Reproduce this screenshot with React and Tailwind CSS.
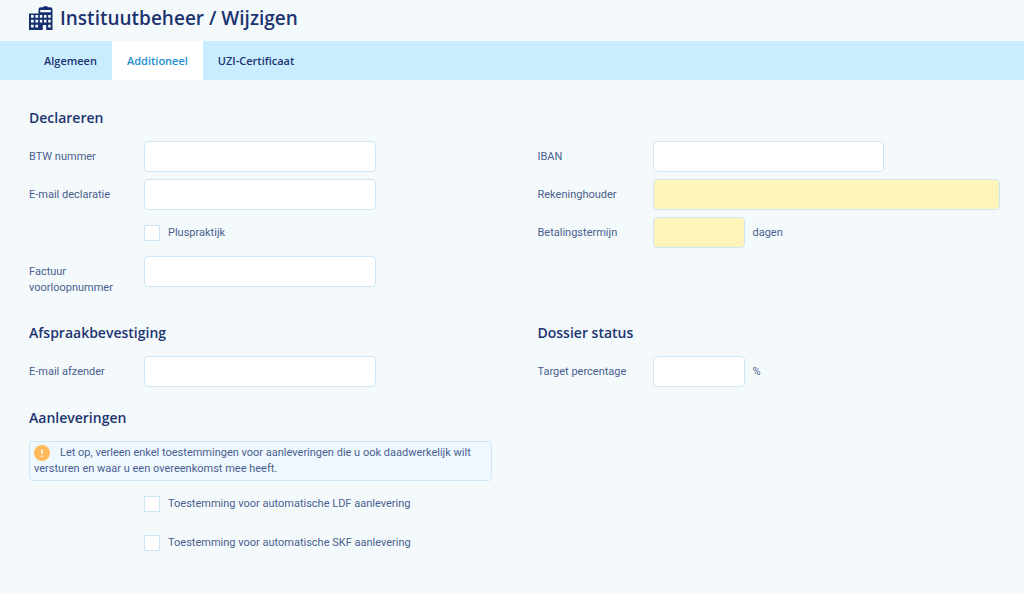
import React, { useState } from 'react';

const tabs = ['Algemeen', 'Additioneel', 'UZI-Certificaat'];

const BuildingIcon = () => (
  <svg viewBox="0 0 24 24" className="w-6 h-6 shrink-0" fill="#16306f" aria-hidden="true">
    <path
      fillRule="evenodd"
      d="M0 7.5h9.5V3.5a2.2 2.2 0 0 1 2.2-2.2h2L15 .3h3l1.3 1h2a2.2 2.2 0 0 1 2.2 2.2V24h-6.3v-5h-3.4v5H0zM11.2 4v2.2h10.6V4zM2 9v2.7h2.7V9zM6.4 9v2.7h2.7V9zM10.8 9v2.7h2.5V9zM15 9v2.7h2.5V9zM19.2 9v2.7h2.5V9zM2 13.8v2.7h2.7v-2.7zM6.4 13.8v2.7h2.7v-2.7zM10.8 13.8v2.7h2.5v-2.7zM15 13.8v2.7h2.5v-2.7zM19.2 13.8v2.7h2.5v-2.7zM2 18.8v2.7h2.7v-2.7zM6.4 18.8v2.7h2.7v-2.7zM19.2 18.8v2.7h2.5v-2.7z"
    />
  </svg>
);

const WarningIcon = () => (
  <svg viewBox="0 0 16 16" className="inline-block w-4 h-4 mr-[10px] align-middle" aria-hidden="true">
    <circle cx="8" cy="8" r="8" fill="#ffb95a" />
    <path d="M8 4.2v4.6M8 10.6v1.4" stroke="#fff" strokeWidth="1.4" />
  </svg>
);

const Heading = ({ children }) => (
  <h2 className="mb-[11px] font-['Open_Sans',sans-serif] text-[14px] leading-6 font-semibold text-[#1c3470]">
    {children}
  </h2>
);

const widths = {
  normal: 'w-2/3',
  small: 'w-[92px]',
  full: 'w-full',
};

const Field = ({ id, label, type = 'text', width = 'normal', required = false, suffix }) => (
  <div className="flex items-start">
    <label htmlFor={id} className="w-[115px] shrink-0 pt-2 pr-2">
      {label}
    </label>
    <div className="flex-1 flex items-center gap-2">
      <input
        id={id}
        name={id}
        type={type}
        required={required}
        className={`h-[31px] px-2 rounded border border-[#cfe7f5] outline-none focus:border-[#1e8fd0] ${
          required ? 'bg-[#fff5ba]' : 'bg-white'
        } ${widths[width]}`}
      />
      {suffix && <span>{suffix}</span>}
    </div>
  </div>
);

const CheckField = ({ id, label }) => (
  <div className="flex items-center h-8 ml-[115px]">
    <input
      id={id}
      name={id}
      type="checkbox"
      className="appearance-none w-4 h-4 bg-white border border-[#cfe7f5] checked:bg-[#1e8fd0]"
    />
    <label htmlFor={id} className="pl-2">
      {label}
    </label>
  </div>
);

export default function App() {
  const [active, setActive] = useState('Additioneel');

  return (
    <div className="min-h-screen bg-[#f4f9fc] font-[Roboto,sans-serif] text-[11px] leading-4 text-[#4a5f8f]">
      <header className="flex items-center gap-[7px] h-[41px] pl-[29px] pb-[5px]">
        <BuildingIcon />
        <h1 className="font-['Open_Sans',sans-serif] text-[19px] leading-7 font-semibold text-[#1c3470]">
          Instituutbeheer / Wijzigen
        </h1>
      </header>

      <nav className="flex h-[39px] pl-[29px] bg-[#c9edff] font-['Open_Sans',sans-serif]">
        {tabs.map((tab) => (
          <button
            key={tab}
            type="button"
            onClick={() => setActive(tab)}
            className={`px-[15px] font-semibold ${
              active === tab ? 'bg-white text-[#1e8fd0]' : 'text-[#1c3470]'
            }`}
          >
            {tab}
          </button>
        ))}
      </nav>

      <form className="grid grid-cols-2 gap-x-[46px] pt-[26px] pl-[29px] pr-6 pb-9">
        <section>
          <Heading>Declareren</Heading>
          <div className="flex flex-col gap-[7px]">
            <Field id="btw" label="BTW nummer" />
            <Field id="email-declaratie" label="E-mail declaratie" type="email" />
            <CheckField id="pluspraktijk" label="Pluspraktijk" />
            <Field id="factuur" label="Factuur voorloopnummer" />
          </div>
        </section>

        <section className="pt-[35px]">
          <div className="flex flex-col gap-[7px]">
            <Field id="iban" label="IBAN" />
            <Field id="rekeninghouder" label="Rekeninghouder" width="full" required />
            <Field id="betalingstermijn" label="Betalingstermijn" width="small" required suffix="dagen" />
          </div>
        </section>

        <section className="mt-[25px]">
          <Heading>Afspraakbevestiging</Heading>
          <Field id="email-afzender" label="E-mail afzender" type="email" />
        </section>

        <section className="mt-[25px]">
          <Heading>Dossier status</Heading>
          <Field id="target" label="Target percentage" width="small" suffix="%" />
        </section>

        <section className="mt-[19px]">
          <Heading>Aanleveringen</Heading>
          <p className="mb-[7px] px-1 py-[3px] rounded border border-[#cfe7f5] bg-[#eff8ff]">
            <WarningIcon />
            Let op, verleen enkel toestemmingen voor aanleveringen die u ook daadwerkelijk wilt versturen en waar u een
            overeenkomst mee heeft.
          </p>
          <div className="flex flex-col gap-[7px]">
            <CheckField id="ldf" label="Toestemming voor automatische LDF aanlevering" />
            <CheckField id="skf" label="Toestemming voor automatische SKF aanlevering" />
          </div>
        </section>
      </form>
    </div>
  );
}
